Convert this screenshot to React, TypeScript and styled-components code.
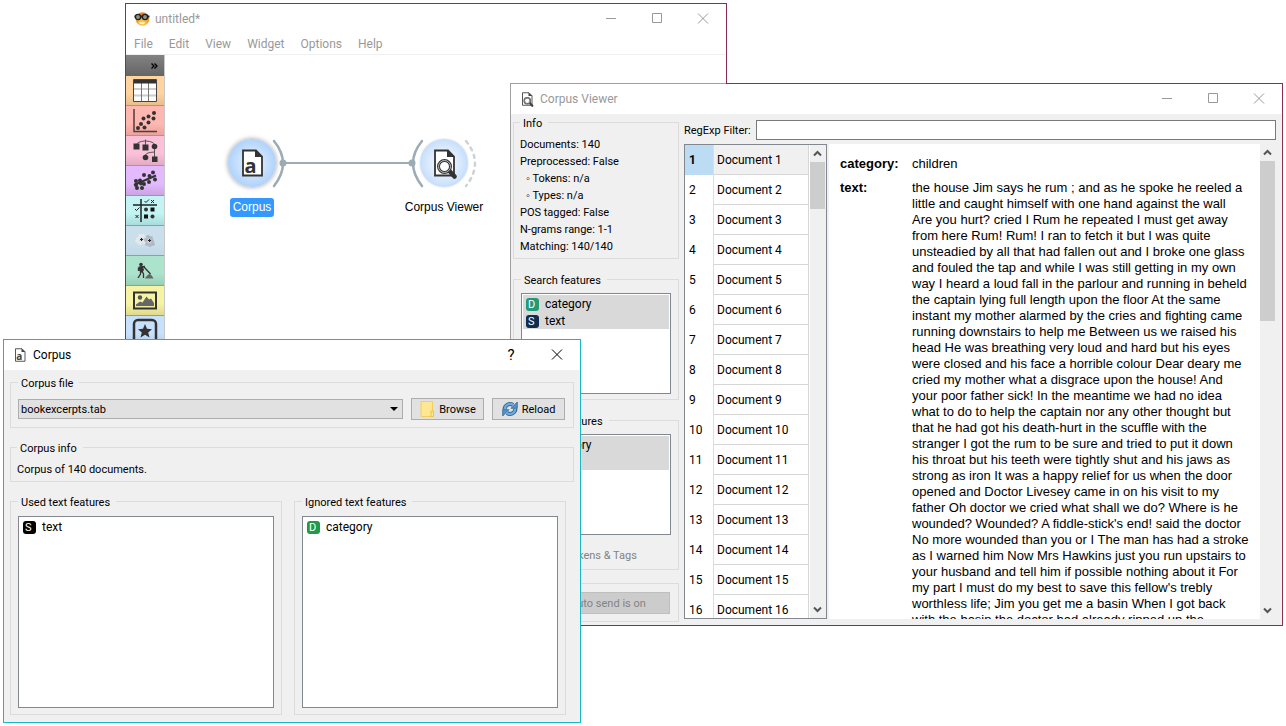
import React from 'react';
import styled, { createGlobalStyle, css } from 'styled-components';

const UI = `Roboto, "Open Sans", sans-serif`;
const ARIAL = `"Liberation Sans", Arial, sans-serif`;

const GlobalStyle = createGlobalStyle`
  *, *::before, *::after { box-sizing: border-box; }
  body { margin: 0; background: #fff; color: #000; font: 11px/17px ${UI}; }
  button, input, select { font: inherit; color: inherit; margin: 0; }
  svg { display: block; flex: none; }
`;

/* ---------- windows ---------- */

const Desktop = styled.main`
  position: relative;
  min-height: 100vh;
  overflow: hidden;
`;

const Window = styled.section`
  position: absolute;
  display: flex;
  flex-direction: column;
`;

const CanvasWindow = styled(Window)`
  left: 125px;
  top: 3px;
  width: 602px;
  height: 420px;
  border: 1px solid #8b2c58;
  background: #fff;
`;

const ViewerWindow = styled(Window)`
  left: 510px;
  right: 3px;
  top: 83px;
  height: 543px;
  border: 1px solid #8b2c58;
  border-left-color: #a0a0a0;
  background: #f0f0f0;

  &::before {
    content: '';
    position: absolute;
    left: -1px;
    top: -1px;
    width: 216px;
    height: 1px;
    background: #a0a0a0;
  }
`;

const CorpusWindow = styled(Window)`
  left: 3px;
  top: 339px;
  width: 578px;
  height: 384px;
  border: 1px solid #18b7c4;
  background: #f0f0f0;
`;

const TitleBar = styled.header<{ $active?: boolean }>`
  display: flex;
  align-items: center;
  flex: none;
  height: 30px;
  padding-left: 8px;
  background: #fff;
  color: ${(p) => (p.$active ? '#000' : '#999')};
`;

const TitleText = styled.h1`
  flex: 1;
  margin: 0 0 0 5px;
  font-size: 12px;
  font-weight: 400;
`;

const CaptionButton = styled.button`
  display: flex;
  align-items: center;
  justify-content: center;
  width: 46px;
  height: 100%;
  padding: 0;
  border: 0;
  background: none;
  font-size: 15px;
`;

const Glyph = ({ d }: { d: string }) => (
  <svg width="12" height="12" viewBox="0 0 12 12" fill="none" stroke="currentColor">
    <path d={d} />
  </svg>
);

const WindowButtons = () => (
  <>
    <CaptionButton aria-label="Minimize"><Glyph d="M1 5.500H11" /></CaptionButton>
    <CaptionButton aria-label="Maximize"><Glyph d="M1.500 0.500H10.500V9.500H1.500Z" /></CaptionButton>
    <CaptionButton aria-label="Close"><Glyph d="M1 0.500L11 10.500M11 0.500L1 10.500" /></CaptionButton>
  </>
);

/* ---------- group boxes and lists ---------- */

const GroupBox = styled.fieldset<{ $grow?: boolean; $pad?: string }>`
  min-width: 0;
  margin: 0;
  padding: ${(p) => p.$pad ?? '7px'};
  border: 1px solid #dcdcdc;
  ${(p) => p.$grow && css`flex: 1;`}
`;

const Legend = styled.legend`
  height: 14px;
  padding: 0 6px 0 3px;
  line-height: 17px;
`;

const Plain = styled.p<{ $indent?: boolean }>`
  margin: 0;
  padding-left: ${(p) => (p.$indent ? '6px' : '0')};
`;

const FeatureList = styled.ul<{ $height: number; $selected?: boolean }>`
  height: ${(p) => p.$height}px;
  margin: 0;
  padding: 1px;
  border: 1px solid #828790;
  background: #fff;
  list-style: none;
  font-size: 12px;

  li {
    display: flex;
    align-items: center;
    gap: 6px;
    height: 17px;
    padding: 1px 0 0 3px;
    line-height: 16px;
    background: ${(p) => (p.$selected ? '#d9d9d9' : 'transparent')};
  }
`;

const TypeBadge = styled.span<{ $color: string }>`
  width: 13px;
  height: 13px;
  padding-left: 2px;
  border-radius: 3px;
  background: ${(p) => p.$color};
  color: #fff;
  font-size: 11px;
  line-height: 13px;
`;

const Feature = ({ kind, color, name }: { kind: string; color: string; name: string }) => (
  <li>
    <TypeBadge $color={color}>{kind}</TypeBadge>
    {name}
  </li>
);

/* ---------- scroll bars ---------- */

const Track = styled.div`
  display: flex;
  flex-direction: column;
  flex: none;
  width: 16px;
  padding-right: 1px;
  background: #f0f0f0;
`;

const ArrowButton = styled.button`
  display: flex;
  align-items: center;
  justify-content: center;
  height: 17px;
  padding: 0;
  border: 0;
  background: none;
  color: #555;
`;

const Thumb = styled.div<{ $length: number }>`
  height: ${(p) => p.$length}px;
  margin-bottom: auto;
  background: #cdcdcd;
`;

const ScrollBar = ({ length }: { length: number }) => (
  <Track>
    <ArrowButton aria-label="Scroll up">
      <svg width="9" height="7" viewBox="0 0 9 7" fill="none" stroke="currentColor" strokeWidth="2">
        <path d="M1 5.500L4.500 2L8 5.500" />
      </svg>
    </ArrowButton>
    <Thumb $length={length} />
    <ArrowButton aria-label="Scroll down">
      <svg width="9" height="7" viewBox="0 0 9 7" fill="none" stroke="currentColor" strokeWidth="2">
        <path d="M1 1.500L4.500 5L8 1.500" />
      </svg>
    </ArrowButton>
  </Track>
);

/* ---------- canvas window ---------- */

const MenuBar = styled.nav`
  display: flex;
  gap: 16px;
  flex: none;
  height: 21px;
  padding-left: 8px;
  border-bottom: 1px solid #f0f0f0;
`;

const MenuItem = styled.button`
  padding: 0;
  border: 0;
  background: none;
  color: #999;
  font-size: 12px;
  line-height: 14px;
`;

const Workspace = styled.div`
  display: flex;
  flex: 1;
  min-height: 0;
`;

const ToolStrip = styled.div`
  flex: none;
  width: 39px;
  overflow: hidden;
  border-right: 1px solid #c8c8c8;
`;

const Expander = styled.button`
  display: flex;
  align-items: center;
  justify-content: flex-end;
  width: 100%;
  height: 21px;
  padding: 0 6px 0 0;
  border: 0;
  background: linear-gradient(#838383, #646464);
`;

const Category = styled.button<{ $from: string; $to: string }>`
  display: flex;
  align-items: center;
  justify-content: center;
  width: 100%;
  height: 30px;
  padding: 0;
  border: 0;
  border-bottom: 1px solid #9a9a9a;
  background: linear-gradient(${(p) => p.$from} 60%, ${(p) => p.$to});
`;

const Canvas = styled.div`
  position: relative;
  flex: 1;
`;

const Links = styled.svg`
  position: absolute;
  left: 54px;
  top: 78px;
`;

const Node = styled.div<{ $x: number; $y: number }>`
  position: absolute;
  left: ${(p) => p.$x}px;
  top: ${(p) => p.$y}px;
  display: flex;
  flex-direction: column;
  align-items: center;
  gap: 11px;
  width: 100px;
`;

const NodeLabel = styled.span<{ $selected?: boolean }>`
  padding: 1px 3px;
  border-radius: 3px;
  background: ${(p) => (p.$selected ? '#3399ff' : 'transparent')};
  color: ${(p) => (p.$selected ? '#fff' : '#000')};
  font: 12px/17px ${ARIAL};
`;

const ToolIcon = ({ children }: { children: React.ReactNode }) => (
  <svg width="26" height="26" viewBox="0 1 26 26" fill="#333">{children}</svg>
);

const dots = (points: number[][], r: number) =>
  points.map(([x, y]) => <circle key={`${x}-${y}`} cx={x} cy={y} r={r} />);

const categories = [
  {
    name: 'Data', from: '#ffd39f', to: '#e8bf8b',
    icon: (
      <ToolIcon>
        <path d="M2 3H24V25H2Z" fill="#fff" />
        <path d="M2 12H24M2 18.500H24" stroke="#ccc" strokeWidth="2" />
        <path d="M9.500 6V25M16.500 6V25" stroke="#777" />
        <path d="M2 2H24V6.500H2Z" />
        <path d="M1.500 2.500H24.500V24.500H1.500Z" fill="none" stroke="#444" />
      </ToolIcon>
    ),
  },
  {
    name: 'Visualize', from: '#ffb7b1', to: '#e9a39d',
    icon: (
      <ToolIcon>
        <path d="M2 2V24.500H25" fill="none" stroke="#5a3a38" strokeWidth="1.500" />
        {dots([[6, 21], [9, 17], [12.500, 20.500], [11.500, 11.500], [16.500, 15.500], [16.500, 9.500], [21.500, 11.500], [22, 6]], 2)}
      </ToolIcon>
    ),
  },
  {
    name: 'Classify', from: '#fac1d9', to: '#e3abc3',
    icon: (
      <ToolIcon>
        <path d="M4.500 8Q5 4.500 13 4H14Q22 4.500 22.500 8M13.500 2.500V8M22.500 10V20M13.500 18Q14 15.500 22.500 15" fill="none" stroke="#555" />
        <path d="M1.500 6.500H7.500V12.500H1.500ZM10.500 7.500H16.500V13.500H10.500ZM20 19.500H25.500V25H20Z" />
        {dots([[22.500, 9.500], [13.500, 20.500]], 2.8)}
      </ToolIcon>
    ),
  },
  {
    name: 'Regression', from: '#e3bafe', to: '#cba4e4',
    icon: (
      <ToolIcon>
        <path d="M2 18L24 8.500" stroke="#333" strokeWidth="2" />
        {dots([[4, 14], [4, 18], [5, 21], [10, 21], [8, 13.500], [12, 8], [12, 17], [17.500, 9], [17, 15], [21, 5.500], [23, 12.500], [9, 16.500]], 2)}
      </ToolIcon>
    ),
  },
  {
    name: 'Evaluate', from: '#c3f3f3', to: '#a9dcdc',
    icon: (
      <ToolIcon>
        <path d="M1 8H25M9 2V25" stroke="#222" strokeWidth="1.500" />
        <path d="M12.500 4L14 5.500L17 2.500M3 12L4.500 13.500L7.500 10.500M19 3L22 6M22 3L19 6M3.500 18L6.500 21M6.500 18L3.500 21" fill="none" stroke="#222" />
        <path d="M18.500 10.500H22.500V14.500H18.500ZM12 17.500H16V21.500H12Z" fill="#111" />
        {dots([[14, 12.500], [20.500, 19.500]], 2)}
      </ToolIcon>
    ),
  },
  {
    name: 'Unsupervised', from: '#c9dfec', to: '#c1d8e6',
    icon: (
      <ToolIcon>
        <g fill="#e8e8e8">{dots([[8, 9], [6, 12], [8, 16], [11, 9], [12, 15], [5, 14]], 2)}</g>
        <g fill="#b3b9c2">{dots([[16, 10], [19, 11], [20, 14], [18, 18], [15, 17], [21, 17], [14, 13]], 2)}</g>
        <path d="M8 12.500H11M9.500 11V14M16 13.500H19M17.500 12V15" stroke="#222" />
      </ToolIcon>
    ),
  },
  {
    name: 'Educational', from: '#abe3cc', to: '#97cfb7',
    icon: (
      <ToolIcon>
        <circle cx="9" cy="7.500" r="1.800" />
        <path d="M6.500 9.500H11L12 13L10 16L7 13.500Z" />
        <path d="M8 10L13 9.500M12 10L18.500 17M10 14L11.500 17V21M8.500 14L8.500 17L6 21M6.500 10.500V14" fill="none" stroke="#333" strokeWidth="1.300" />
        <path d="M13 21.500Q15.500 17 18 17Q20 18 21.500 21.500Z" fill="#666" />
      </ToolIcon>
    ),
  },
  {
    name: 'Image Analytics', from: '#f6f3a5', to: '#dfdb8b',
    icon: (
      <ToolIcon>
        <path d="M2 5.500H24V21.500H2Z" fill="none" stroke="#333" strokeWidth="2" />
        <circle cx="8" cy="10.500" r="2.200" fill="#555" />
        <path d="M4 19V17.500L8 14.500L10.500 15.500L14.500 9.500L17 12.500L19 11.500L22 16V19Z" fill="#666" />
      </ToolIcon>
    ),
  },
  {
    name: 'Text Mining', from: '#c7e0fb', to: '#b2cdec',
    icon: (
      <ToolIcon>
        <rect x="2" y="3" width="22" height="24" rx="4" fill="none" stroke="#333" strokeWidth="2.500" />
        <path d="M13 7L15 11.800L20 12.200L16.200 15.500L17.500 20.500L13 17.800L8.500 20.500L9.800 15.500L6 12.200L11 11.800Z" />
      </ToolIcon>
    ),
  },
];

const AppLogo = () => (
  <svg width="16" height="16" viewBox="0 0 16 16">
    <defs>
      <radialGradient id="face" cx="50%" cy="80%" r="70%">
        <stop offset="0" stopColor="#ffd75a" />
        <stop offset="1" stopColor="#ee7d1c" />
      </radialGradient>
    </defs>
    <circle cx="8.500" cy="8" r="6.800" fill="url(#face)" />
    <path d="M0.500 5.500H15.500" stroke="#222" strokeWidth="2" />
    <circle cx="4" cy="6" r="2.600" fill="#8b958a" stroke="#222" strokeWidth="1.400" />
    <circle cx="11" cy="6" r="2.600" fill="#8b958a" stroke="#222" strokeWidth="1.400" />
    <path d="M5.500 11.500Q8 13 10.500 11.500" fill="none" stroke="#fff3c0" strokeWidth="1.500" />
  </svg>
);

const DocLetter = ({ size, ink }: { size: number; ink: string }) => (
  <svg width={size} height={size} viewBox="0 0 32 32">
    <path d="M7 3.500H20L26 9.500V28.500H7Z" fill="#fff" stroke={ink} strokeWidth="1.800" />
    <path d="M19 3V10H26.500Z" fill={ink} />
    <text x="8.500" y="25.500" fontFamily="Noto Sans, sans-serif" fontWeight="700" fontSize="20" fill={ink}>a</text>
  </svg>
);

const DocLens = ({ size, ink }: { size: number; ink: string }) => (
  <svg width={size} height={size} viewBox="0 0 32 32">
    <path d="M7 3.500H20L26 9.500V28.500H7Z" fill="#fff" stroke={ink} strokeWidth="1.800" />
    <path d="M19 3V10H26.500Z" fill={ink} />
    <path d="M21 23.500L26.500 29.500" stroke={ink} strokeWidth="4.500" strokeLinecap="round" />
    <circle cx="16.500" cy="19.500" r="6" fill="#fff" stroke={ink} strokeWidth="3" />
    <circle cx="16.500" cy="19.500" r="6" fill="none" stroke="#ddd" strokeWidth="0.800" />
  </svg>
);

const Disc = styled.div<{ $selected?: boolean }>`
  display: flex;
  align-items: center;
  justify-content: center;
  width: 48px;
  height: 48px;
  border-radius: 50%;
  background: ${(p) =>
    p.$selected
      ? 'radial-gradient(#e3f0ff 10%, #acd0fb 75%)'
      : 'radial-gradient(#e8f2fe 30%, #c2dcfb 75%)'};
  box-shadow: ${(p) => (p.$selected ? '0 0 5px #9a9a9a' : '0 0 2px #d0d0d0')};
`;

const OrangeCanvas = () => (
  <CanvasWindow aria-label="untitled">
    <TitleBar>
      <AppLogo />
      <TitleText>untitled*</TitleText>
      <WindowButtons />
    </TitleBar>
    <MenuBar>
      {['File', 'Edit', 'View', 'Widget', 'Options', 'Help'].map((m) => (
        <MenuItem key={m}>{m}</MenuItem>
      ))}
    </MenuBar>
    <Workspace>
      <ToolStrip>
        <Expander aria-label="Expand">
          <svg width="7" height="6" viewBox="0 0 7 6" fill="none" stroke="#000" strokeWidth="1.300">
            <path d="M0.500 0.500L3 3L0.500 5.500M3.500 0.500L6 3L3.500 5.500" />
          </svg>
        </Expander>
        {categories.map((c) => (
          <Category key={c.name} aria-label={c.name} $from={c.from} $to={c.to}>
            {c.icon}
          </Category>
        ))}
      </ToolStrip>
      <Canvas>
        <Links width="264" height="60" viewBox="0 0 264 60" fill="none" stroke="#9cacb4">
          <path d="M64 30H193" strokeWidth="2" />
          <path d="M55 8Q73 30 55 53" strokeWidth="2.500" strokeLinecap="round" />
          <path d="M203 8Q185 30 203 53" strokeWidth="2.500" strokeLinecap="round" />
          <path d="M247 8Q265 30 247 53" strokeWidth="2.500" strokeLinecap="round" strokeDasharray="3 5" stroke="#ccd3d7" />
          <circle cx="64" cy="30" r="3.500" fill="#9cacb4" stroke="none" />
          <circle cx="193" cy="30" r="3.500" fill="#9cacb4" stroke="none" />
        </Links>
        <Node $x={37} $y={84}>
          <Disc $selected><DocLetter size={32} ink="#333" /></Disc>
          <NodeLabel $selected>Corpus</NodeLabel>
        </Node>
        <Node $x={229} $y={84}>
          <Disc><DocLens size={32} ink="#333" /></Disc>
          <NodeLabel>Corpus Viewer</NodeLabel>
        </Node>
      </Canvas>
    </Workspace>
  </CanvasWindow>
);

/* ---------- corpus viewer window ---------- */

const ViewerBody = styled.div`
  display: flex;
  flex: 1;
  gap: 5px;
  min-height: 0;
  padding: 1px 6px 3px 2px;
`;

const Controls = styled.div`
  display: flex;
  flex-direction: column;
  flex: none;
  gap: 13px;
  width: 166px;
`;

const CheckRow = styled.label`
  display: flex;
  align-items: center;
  gap: 2px;
  height: 17px;
  margin-top: 12px;
  color: #838383;

  input { width: 13px; height: 13px; }
`;

const SendRow = styled.div`
  display: flex;
  align-items: center;
  gap: 12px;

  input { width: 13px; height: 13px; }
`;

const SendButton = styled.button`
  flex: 1;
  height: 22px;
  padding: 0;
  border: 1px solid #bfbfbf;
  background: #ccc;
  color: #838383;
`;

const Main = styled.div`
  display: flex;
  flex: 1;
  flex-direction: column;
  gap: 4px;
  min-width: 0;
  padding: 5px 0 3px;
`;

const FilterRow = styled.div`
  display: flex;
  align-items: center;

  label { flex: none; width: 72px; }
  input {
    flex: 1;
    min-width: 0;
    height: 20px;
    padding: 0 3px;
    border: 1px solid #7a7a7a;
    background: #fff;
  }
`;

const Panes = styled.div`
  display: flex;
  flex: 1;
  gap: 2px;
  min-height: 0;
`;

const DocumentPane = styled.div`
  display: flex;
  flex: none;
  width: 143px;
  overflow: hidden;
  border: 1px solid #828790;
  background: #fff;
`;

const TableClip = styled.div`
  flex: 1;
  overflow: hidden;
`;

const DocumentTable = styled.table`
  width: 124px;
  border-collapse: separate;
  border-spacing: 0;
  table-layout: fixed;
  font-size: 12px;

  th, td { height: 30px; padding: 0 0 0 4px; text-align: left; }
  th { width: 29px; border-right: 1px solid #dedede; font-weight: 400; }
  td {
    padding: 2px 0 0 3px;
    border-right: 1px solid #d6d6d6;
    border-bottom: 1px solid #d6d6d6;
  }
  tr[aria-selected='true'] th { background: #bbdcf3; font-weight: 700; }
  tr[aria-selected='true'] td { background: #f0f0f0; }
`;

const TextPane = styled.div`
  display: flex;
  flex: 1;
  min-width: 0;
  overflow: hidden;
  background: #fff;
`;

const Fields = styled.dl`
  display: grid;
  grid-template-columns: 72px 1fr;
  align-content: start;
  flex: 1;
  row-gap: 8px;
  min-width: 0;
  margin: 0;
  padding: 12px 0 0 11px;
  font: 13px/16px ${ARIAL};

  dt { font-weight: 700; }
  dd { margin: 0; white-space: pre; }
`;

const excerpt = `the house Jim says he rum ; and as he spoke he reeled a
little and caught himself with one hand against the wall
Are you hurt? cried I Rum he repeated I must get away
from here Rum! Rum! I ran to fetch it but I was quite
unsteadied by all that had fallen out and I broke one glass
and fouled the tap and while I was still getting in my own
way I heard a loud fall in the parlour and running in beheld
the captain lying full length upon the floor At the same
instant my mother alarmed by the cries and fighting came
running downstairs to help me Between us we raised his
head He was breathing very loud and hard but his eyes
were closed and his face a horrible colour Dear deary me
cried my mother what a disgrace upon the house! And
your poor father sick! In the meantime we had no idea
what to do to help the captain nor any other thought but
that he had got his death-hurt in the scuffle with the
stranger I got the rum to be sure and tried to put it down
his throat but his teeth were tightly shut and his jaws as
strong as iron It was a happy relief for us when the door
opened and Doctor Livesey came in on his visit to my
father Oh doctor we cried what shall we do? Where is he
wounded? Wounded? A fiddle-stick's end! said the doctor
No more wounded than you or I The man has had a stroke
as I warned him Now Mrs Hawkins just you run upstairs to
your husband and tell him if possible nothing about it For
my part I must do my best to save this fellow's trebly
worthless life; Jim you get me a basin When I got back
with the basin the doctor had already ripped up the`;

const CorpusViewer = () => (
  <ViewerWindow aria-label="Corpus Viewer">
    <TitleBar>
      <DocLens size={16} ink="#444" />
      <TitleText>Corpus Viewer</TitleText>
      <WindowButtons />
    </TitleBar>
    <ViewerBody>
      <Controls>
        <GroupBox $pad="7px 7px 3px 6px">
          <Legend>Info</Legend>
          <Plain>Documents: 140</Plain>
          <Plain>Preprocessed: False</Plain>
          <Plain $indent>◦ Tokens: n/a</Plain>
          <Plain $indent>◦ Types: n/a</Plain>
          <Plain>POS tagged: False</Plain>
          <Plain>N-grams range: 1-1</Plain>
          <Plain>Matching: 140/140</Plain>
        </GroupBox>
        <GroupBox $pad="7px 7px 5px">
          <Legend>Search features</Legend>
          <FeatureList $height={101} $selected>
            <Feature kind="D" color="#229977" name="category" />
            <Feature kind="S" color="#0f2d4f" name="text" />
          </FeatureList>
        </GroupBox>
        <GroupBox $pad="7px 7px 5px">
          <Legend>Display features</Legend>
          <FeatureList $height={101} $selected>
            <Feature kind="D" color="#229977" name="category" />
            <Feature kind="S" color="#0f2d4f" name="text" />
          </FeatureList>
          <CheckRow>
            <input type="checkbox" disabled />
            Show Tokens &amp; Tags
          </CheckRow>
        </GroupBox>
        <GroupBox $pad="8px 8px 7px 7px">
          <SendRow>
            <input type="checkbox" aria-label="Auto send" defaultChecked disabled />
            <SendButton disabled>Auto send is on</SendButton>
          </SendRow>
        </GroupBox>
      </Controls>
      <Main>
        <FilterRow>
          <label htmlFor="regexp">RegExp Filter:</label>
          <input id="regexp" type="text" />
        </FilterRow>
        <Panes>
          <DocumentPane>
            <TableClip>
              <DocumentTable>
                <tbody>
                  {Array.from({ length: 16 }, (_, i) => i + 1).map((n) => (
                    <tr key={n} aria-selected={n === 1}>
                      <th scope="row">{n}</th>
                      <td>Document {n}</td>
                    </tr>
                  ))}
                </tbody>
              </DocumentTable>
            </TableClip>
            <ScrollBar length={47} />
          </DocumentPane>
          <TextPane>
            <Fields>
              <dt>category:</dt>
              <dd>children</dd>
              <dt>text:</dt>
              <dd>{excerpt}</dd>
            </Fields>
            <ScrollBar length={160} />
          </TextPane>
        </Panes>
      </Main>
    </ViewerBody>
  </ViewerWindow>
);

/* ---------- corpus window ---------- */

const CorpusBody = styled.div`
  display: flex;
  flex: 1;
  flex-direction: column;
  gap: 12px;
  min-height: 0;
  padding: 5px 6px 7px;
`;

const FileRow = styled.div`
  display: flex;
  align-items: center;
  gap: 8px;
`;

const SelectBox = styled.div`
  position: relative;
  display: flex;
  flex: 1;

  select {
    flex: 1;
    height: 20px;
    padding: 0 20px 0 2px;
    border: 1px solid #adadad;
    border-radius: 0;
    background: #e1e1e1;
    appearance: none;
  }
  svg { position: absolute; right: 5px; top: 8px; pointer-events: none; }
`;

const PushButton = styled.button`
  display: flex;
  align-items: center;
  justify-content: center;
  gap: 4px;
  width: 73px;
  height: 22px;
  padding: 0;
  border: 1px solid #adadad;
  background: #e1e1e1;
`;

const Columns = styled.div`
  display: flex;
  flex: 1;
  gap: 12px;
  padding-right: 8px;
`;

const FolderIcon = () => (
  <svg width="16" height="18" viewBox="0 0 16 18">
    <path d="M2 1.500H13.500V16.500H2Z" fill="#ffe692" stroke="#f2cf5c" />
    <path d="M12 11H14.500V16.500H12Z" fill="#ffe692" stroke="#edc440" />
  </svg>
);

const ReloadIcon = () => (
  <svg width="16" height="16" viewBox="0 0 16 16" fill="none">
    <path d="M2.500 8.500A5.500 5.500 0 0 1 11 4M13.500 7.500A5.500 5.500 0 0 1 5 12" stroke="#35658f" strokeWidth="4" />
    <path d="M15.300 1V7.300H9ZM0.700 15V8.700H7Z" fill="#4d93cf" stroke="#35658f" strokeWidth="0.800" />
    <path d="M2.700 8.200A5.300 5.300 0 0 1 11.300 4.200M13.300 7.800A5.300 5.300 0 0 1 4.700 11.800" stroke="#6aaae0" strokeWidth="2.200" />
  </svg>
);

const CorpusDialog = () => (
  <CorpusWindow aria-label="Corpus">
    <TitleBar $active>
      <DocLetter size={16} ink="#444" />
      <TitleText>Corpus</TitleText>
      <CaptionButton aria-label="Help">?</CaptionButton>
      <CaptionButton aria-label="Close"><Glyph d="M1 0.500L11 10.500M11 0.500L1 10.500" /></CaptionButton>
    </TitleBar>
    <CorpusBody>
      <GroupBox $pad="9px 8px 7px 7px">
        <Legend>Corpus file</Legend>
        <FileRow>
          <SelectBox>
            <select aria-label="Corpus file" defaultValue="bookexcerpts.tab">
              <option>bookexcerpts.tab</option>
            </select>
            <svg width="8" height="4" viewBox="0 0 8 4"><path d="M0 0H8L4 4Z" /></svg>
          </SelectBox>
          <PushButton><FolderIcon />Browse</PushButton>
          <PushButton><ReloadIcon />Reload</PushButton>
        </FileRow>
      </GroupBox>
      <GroupBox $pad="7px 6px 3px">
        <Legend>Corpus info</Legend>
        <Plain>Corpus of 140 documents.</Plain>
      </GroupBox>
      <Columns>
        <GroupBox $grow $pad="8px 7px 6px">
          <Legend>Used text features</Legend>
          <FeatureList $height={192}>
            <Feature kind="S" color="#000" name="text" />
          </FeatureList>
        </GroupBox>
        <GroupBox $grow $pad="8px 7px 6px">
          <Legend>Ignored text features</Legend>
          <FeatureList $height={192}>
            <Feature kind="D" color="#1f9a48" name="category" />
          </FeatureList>
        </GroupBox>
      </Columns>
    </CorpusBody>
  </CorpusWindow>
);

export default function App() {
  return (
    <Desktop>
      <GlobalStyle />
      <OrangeCanvas />
      <CorpusViewer />
      <CorpusDialog />
    </Desktop>
  );
}
